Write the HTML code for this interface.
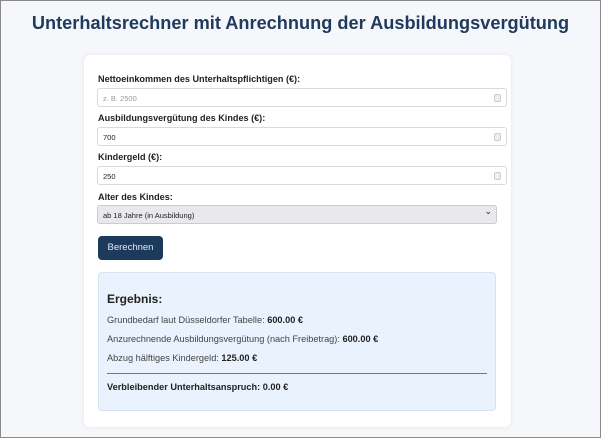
<!DOCTYPE html>
<html><head><meta charset="utf-8"><style>
*{box-sizing:border-box;margin:0;padding:0}
html,body{width:601px;height:438px;overflow:hidden}
body{background:#f5f7fa;font-family:"Liberation Sans",Arial,sans-serif;border:1px solid #8a8a8a;position:relative}
h1{position:absolute;left:0;width:599px;top:12px;text-align:center;font-size:18.2px;color:#1e3a5c;font-weight:bold}
.card{position:absolute;left:83px;top:54px;width:427px;height:372px;background:#fff;border-radius:6px;box-shadow:0 0 4px rgba(0,0,0,0.08)}
.lbl{position:absolute;left:14px;font-size:9.1px;font-weight:bold;color:#222}
.in{position:absolute;left:13px;width:410px;height:19px;border:1px solid #dadada;border-radius:3px;font-size:7.5px;padding:5px 5px;color:#222}
.in .sp{position:absolute;right:5px;top:5px;width:7px;height:8px;border:1px solid #ccc;border-radius:2px;background:#eee}
.sel{position:absolute;left:13px;top:150px;width:400px;height:19px;background:#e9e9ed;border:1px solid #ccc;border-radius:3px;font-size:7.5px;padding:5px 5px;color:#222}
.sel:after{content:"⌄";position:absolute;right:4px;top:0px;font-size:9px}
.btn{position:absolute;left:14px;top:181px;width:65px;height:24px;background:#1b3a5c;border-radius:4px;color:#dfe9f5;font-size:9.5px;text-align:center;line-height:24px}
.res{position:absolute;left:14px;top:217px;width:398px;height:139px;background:#eaf2fd;border:1px solid #d6e3f5;border-radius:4px;color:#444;font-size:9.2px}
.res b{color:#222}
.res p{position:absolute;left:8px}
.hr{position:absolute;left:8px;right:8px;top:100px;border-top:1px solid #777}
</style></head><body>
<h1>Unterhaltsrechner mit Anrechnung der Ausbildungsvergütung</h1>
<div class="card">
<div class="lbl" style="top:19px">Nettoeinkommen des Unterhaltspflichtigen (€):</div>
<div class="in" style="top:33px;color:#999">z. B. 2500<span class="sp"></span></div>
<div class="lbl" style="top:58px">Ausbildungsvergütung des Kindes (€):</div>
<div class="in" style="top:72px">700<span class="sp"></span></div>
<div class="lbl" style="top:97px">Kindergeld (€):</div>
<div class="in" style="top:111px">250<span class="sp"></span></div>
<div class="lbl" style="top:137px">Alter des Kindes:</div>
<div class="sel">ab 18 Jahre (in Ausbildung)</div>
<div class="btn">Berechnen</div>
<div class="res">
<p style="top:19px;font-size:12px;font-weight:bold;color:#222">Ergebnis:</p>
<p style="top:42px">Grundbedarf laut Düsseldorfer Tabelle: <b>600.00 €</b></p>
<p style="top:61px">Anzurechnende Ausbildungsvergütung (nach Freibetrag): <b>600.00 €</b></p>
<p style="top:80px">Abzug hälftiges Kindergeld: <b>125.00 €</b></p>
<div class="hr"></div>
<p style="top:109px"><b>Verbleibender Unterhaltsanspruch: 0.00 €</b></p>
</div>
</div>
</body></html>
